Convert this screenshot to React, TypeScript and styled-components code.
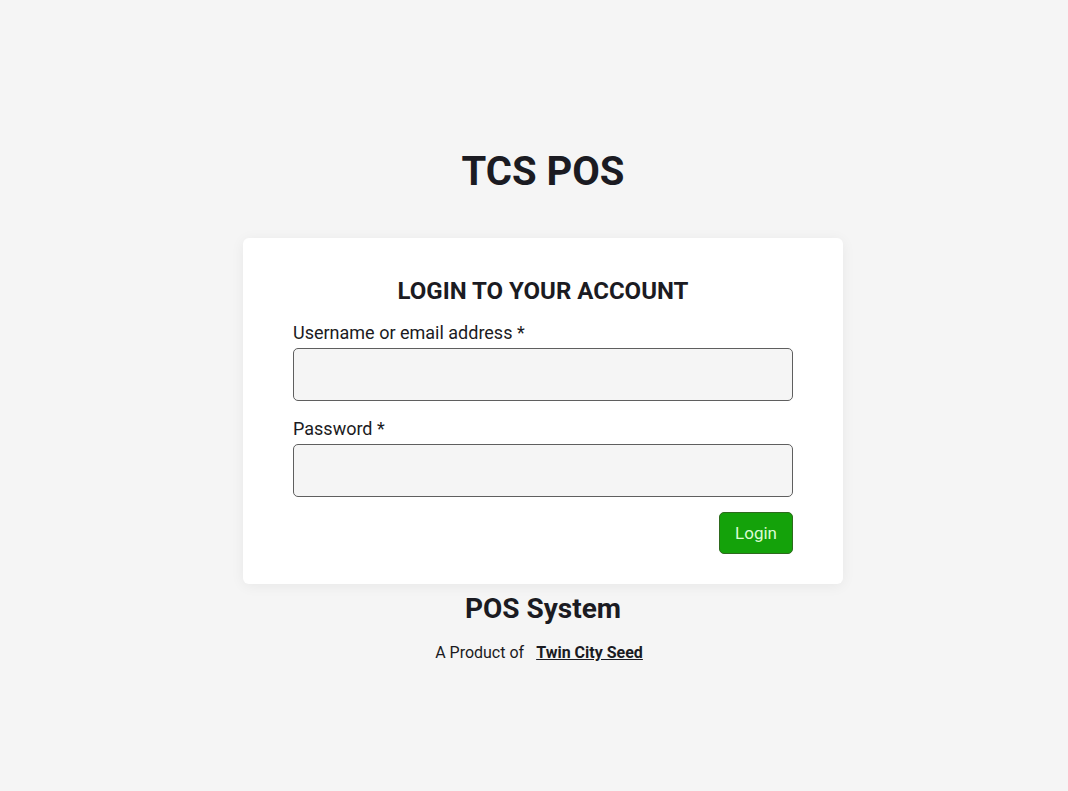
import React from 'react';
import styled, { createGlobalStyle } from 'styled-components';

const GlobalStyle = createGlobalStyle`
  html, body {
    margin: 0;
    padding: 0;
    background: #f5f5f5;
    font-family: Roboto, "Liberation Sans", Arial, sans-serif;
    color: #1b1b22;
  }
  * { box-sizing: border-box; }
`;

const Page = styled.main`
  min-height: 791px;
  display: flex;
  flex-direction: column;
  align-items: center;
  padding: 147px 0 0 18px;
`;

const Brand = styled.h1`
  margin: 0 0 41px 0;
  font-size: 40px;
  line-height: 50px;
  font-weight: 700;
  color: #1b1b22;
`;

const Card = styled.section`
  width: 600px;
  background: #fff;
  border-radius: 6px;
  box-shadow: 0 2px 14px rgba(0, 0, 0, 0.06);
  padding: 37px 50px 30px 50px;
  display: flex;
  flex-direction: column;
`;

const CardTitle = styled.h2`
  margin: 0 0 14px 0;
  text-align: center;
  font-size: 24px;
  line-height: 32px;
  font-weight: 700;
  color: #1b1b22;
`;

const Form = styled.form`
  display: flex;
  flex-direction: column;
`;

const Field = styled.div`
  display: flex;
  flex-direction: column;
  margin-bottom: 16px;
`;

const Label = styled.label`
  font-size: 18px;
  line-height: 24px;
  color: #1b1b22;
  margin-bottom: 3px;
`;

const Input = styled.input`
  height: 53px;
  width: 100%;
  border: 1px solid #5f5f5f;
  border-radius: 5px;
  background: #f5f5f5;
  padding: 0 12px;
  font-size: 16px;
  font-family: inherit;
  outline: none;
`;

const Actions = styled.div`
  display: flex;
  justify-content: flex-end;
  margin-top: -1px;
`;

const Button = styled.button`
  height: 42px;
  padding: 0 15px;
  border: 1px solid #2e6a1e;
  border-radius: 5px;
  background: #14a20a;
  color: #dcfcd4;
  font-family: inherit;
  font-size: 17px;
  cursor: pointer;
`;

const Footer = styled.footer`
  display: flex;
  flex-direction: column;
  align-items: center;
  margin-top: 7px;
`;

const Product = styled.h3`
  margin: 0 0 15px 0;
  font-size: 28px;
  line-height: 36px;
  font-weight: 700;
  color: #1b1b22;
`;

const Credit = styled.p`
  margin: 0;
  padding-right: 8px;
  font-size: 16px;
  line-height: 22px;
  color: #1b1b22;
`;

const Link = styled.a`
  margin-left: 12px;
  font-weight: 700;
  color: #1b1b22;
  text-decoration: underline;
`;

export default function App() {
  return (
    <>
      <GlobalStyle />
      <Page>
        <Brand>TCS POS</Brand>
        <Card>
          <CardTitle>LOGIN TO YOUR ACCOUNT</CardTitle>
          <Form onSubmit={(e) => e.preventDefault()}>
            <Field>
              <Label htmlFor="username">Username or email address *</Label>
              <Input id="username" type="text" />
            </Field>
            <Field>
              <Label htmlFor="password">Password *</Label>
              <Input id="password" type="password" />
            </Field>
            <Actions>
              <Button type="submit">Login</Button>
            </Actions>
          </Form>
        </Card>
        <Footer>
          <Product>POS System</Product>
          <Credit>
            A Product of<Link href="#">Twin City Seed</Link>
          </Credit>
        </Footer>
      </Page>
    </>
  );
}
